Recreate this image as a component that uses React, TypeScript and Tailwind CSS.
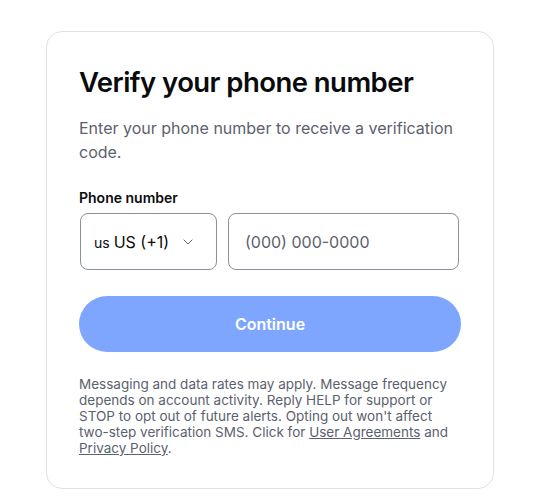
import { ChevronDown } from 'lucide-react';

// Phone verification card
function App() {
    return (
        <div className="min-h-screen bg-white pt-[31px] pl-[46px]" style={{ fontFamily: 'Inter, "Noto Sans", sans-serif' }}>
            <div className="w-[448px] rounded-2xl border border-[#dee1e7] bg-white px-8 pt-8 pb-8">
                <h1 className="text-[27.5px] leading-9 font-semibold tracking-[-0.02em] text-[#0a0b0d]">
                    Verify your phone number
                </h1>
                <p className="mt-4 text-base leading-6 text-[#5b616e]">
                    Enter your phone number to receive a verification code.
                </p>

                <label className="mt-6 block text-sm leading-5 font-semibold text-[#0a0b0d]">Phone number</label>
                <div className="mt-[5px] flex gap-[11px]">
                    <button className="ml-px flex h-[57px] w-[137px] shrink-0 items-center rounded-lg border border-[#8a919e] pl-[13px] pr-4">
                        <span className="flex items-baseline">
                            <span className="text-[14px] text-[#0a0b0d]">us</span>
                            <span className="ml-1 text-base text-[#0a0b0d]">US (+1)</span>
                        </span>
                        <ChevronDown className="ml-auto mr-1 h-4 w-4 text-[#5b616e]" strokeWidth={1.5} />
                    </button>
                    <input
                        className="mr-[2px] h-[57px] min-w-0 flex-1 rounded-lg border border-[#8a919e] px-4 text-base text-[#0a0b0d] outline-none placeholder:text-[#5b616e]"
                        placeholder="(000) 000-0000"
                    />
                </div>

                <button className="mt-[26px] h-14 w-full rounded-full bg-[#7fa6ff] text-base font-semibold text-white">
                    Continue
                </button>

                <p className="mt-6 text-[13.5px] leading-4 text-[#5b616e]">
                    Messaging and data rates may apply. Message frequency depends on account activity. Reply HELP for support or
                    STOP to opt out of future alerts. Opting out won't affect two-step verification SMS. Click for{' '}
                    <a className="underline">User Agreements</a> and <a className="underline">Privacy Policy</a>.
                </p>
            </div>
        </div>
    );
}

export default App;
